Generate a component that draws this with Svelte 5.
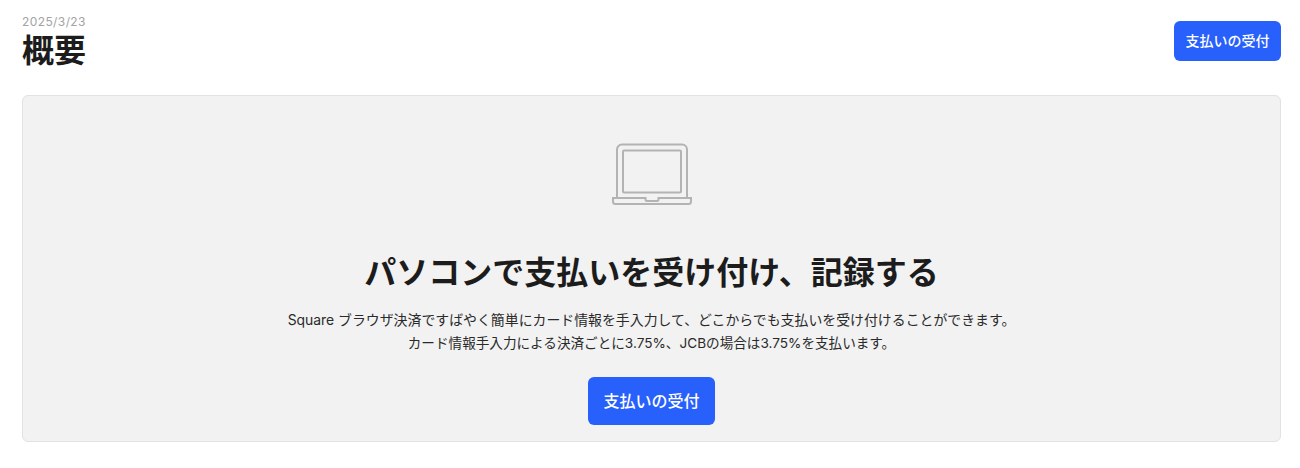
<script lang="ts">
  // Overview page with an empty state card
  const date = '2025/3/23';
  const buttonLabel = '支払いの受付';
</script>

<div class="page">
  <header class="page-header">
    <div class="titles">
      <div class="date">{date}</div>
      <h1>概要</h1>
    </div>
    <button class="btn btn-small">{buttonLabel}</button>
  </header>

  <section class="empty-card">
    <svg class="icon" width="80" height="63" viewBox="0 0 80 63" fill="none" stroke="#b3b3b3" stroke-width="2">
      <path d="M5 55V6.5A5 5 0 0 1 10 1.5H70A5 5 0 0 1 75 6.5V55" />
      <rect x="11" y="7.5" width="58" height="42" rx="1" />
      <path d="M1 55H33.5V56.5A1.5 1.5 0 0 0 35 58H45A1.5 1.5 0 0 0 46.5 56.5V55H79V58.5A2.5 2.5 0 0 1 76.5 61H3.5A2.5 2.5 0 0 1 1 58.5Z" />
    </svg>
    <h2>パソコンで支払いを受け付け、記録する</h2>
    <p>
      <span class="line-one">Square ブラウザ決済ですばやく簡単にカード情報を手入力して、どこからでも支払いを受け付けることができます。</span><br />
      カード情報手入力による決済ごとに3.75%、JCBの場合は3.75%を支払います。
    </p>
    <button class="btn btn-large">{buttonLabel}</button>
  </section>
</div>

<style>
  :global(body) {
    margin: 0;
    background: #fff;
  }

  .page {
    padding: 14px 19px 0 22px;
    font-family: Inter, "Noto Sans CJK JP", sans-serif;
    color: #1c1c1c;
  }

  .page-header {
    display: flex;
    justify-content: space-between;
    align-items: flex-start;
    height: 81px;
  }

  .date {
    font-size: 12px;
    line-height: 15px;
    color: #a3a3a3;
    letter-spacing: 0.4px;
  }

  h1 {
    margin: 3px 0 0;
    font-size: 32px;
    line-height: 38px;
    font-weight: 700;
  }

  .btn {
    border: none;
    background: #2760fb;
    color: #fff;
    font-family: inherit;
    font-weight: 500;
    padding: 0;
  }

  .btn-small {
    margin-top: 7px;
    width: 107px;
    height: 40px;
    padding-bottom: 3px;
    border-radius: 6px;
    font-size: 14px;
  }

  .btn-large {
    margin-top: 22px;
    width: 127px;
    height: 48px;
    padding-bottom: 3px;
    border-radius: 6px;
    font-size: 16px;
  }

  .empty-card {
    height: 347px;
    border: 1px solid #e2e2e2;
    border-radius: 6px;
    background: #f2f2f2;
    display: flex;
    flex-direction: column;
    align-items: center;
    padding-top: 47px;
    box-sizing: border-box;
  }

  .icon {
    display: block;
  }

  h2 {
    margin: 43px 0 0;
    font-size: 32px;
    line-height: 48px;
    font-weight: 700;
  }

  p {
    margin: 12px 0 0;
    font-size: 13.6px;
    line-height: 23px;
    text-align: center;
    color: #2a2a2a;
  }

  .line-one {
    font-size: 13.9px;
  }
</style>
